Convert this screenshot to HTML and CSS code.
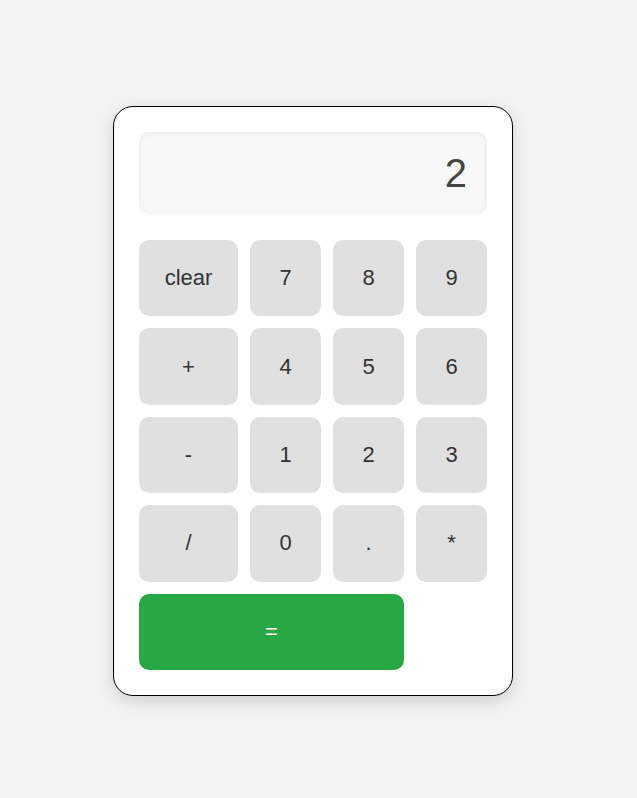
FILE: index.html
```html
<!DOCTYPE html>
<html>
<head>
<meta charset="utf-8">
<link rel="stylesheet" href="styles.css">
</head>
<body>
<div class="page">
  <div class="calculator">
    <div class="display">2</div>
    <div class="keys">
      <button class="key">clear</button>
      <button class="key">7</button>
      <button class="key">8</button>
      <button class="key">9</button>
      <button class="key">+</button>
      <button class="key">4</button>
      <button class="key">5</button>
      <button class="key">6</button>
      <button class="key">-</button>
      <button class="key">1</button>
      <button class="key">2</button>
      <button class="key">3</button>
      <button class="key">/</button>
      <button class="key">0</button>
      <button class="key">.</button>
      <button class="key">*</button>
      <button class="key equals">=</button>
    </div>
  </div>
</div>
</body>
</html>
```

FILE: styles.css
```css
html {
  background: #f3f3f3;
}
body {
  margin: 0;
  min-height: 100vh;
  font-family: "Liberation Sans", Arial, sans-serif;
}
.page {
  padding: 106px 0 40px 113px;
}
.calculator {
  width: 348px;
  padding: 25px;
  background: #fff;
  border: 1px solid #000;
  border-radius: 20px;
  box-shadow: 0 5px 16px rgba(0, 0, 0, 0.15);
}
.display {
  height: 82px;
  box-sizing: border-box;
  padding: 0 20px;
  background: #f8f8f8;
  border-radius: 10px;
  box-shadow: inset 0 1px 5px rgba(0, 0, 0, 0.08);
  color: #444;
  font-size: 40px;
  display: flex;
  align-items: center;
  justify-content: flex-end;
  margin-bottom: 26px;
}
.keys {
  display: grid;
  grid-template-columns: 99px 71px 71px 71px;
  grid-auto-rows: 76.4px;
  column-gap: 12px;
  row-gap: 12px;
}
.key {
  border: none;
  border-radius: 10px;
  background: #e0e0e0;
  color: #333;
  font-family: "Liberation Sans", Arial, sans-serif;
  font-size: 22px;
  padding: 0;
}
.equals {
  grid-column: span 3;
  background: #28a745;
  color: #fff;
}
```
